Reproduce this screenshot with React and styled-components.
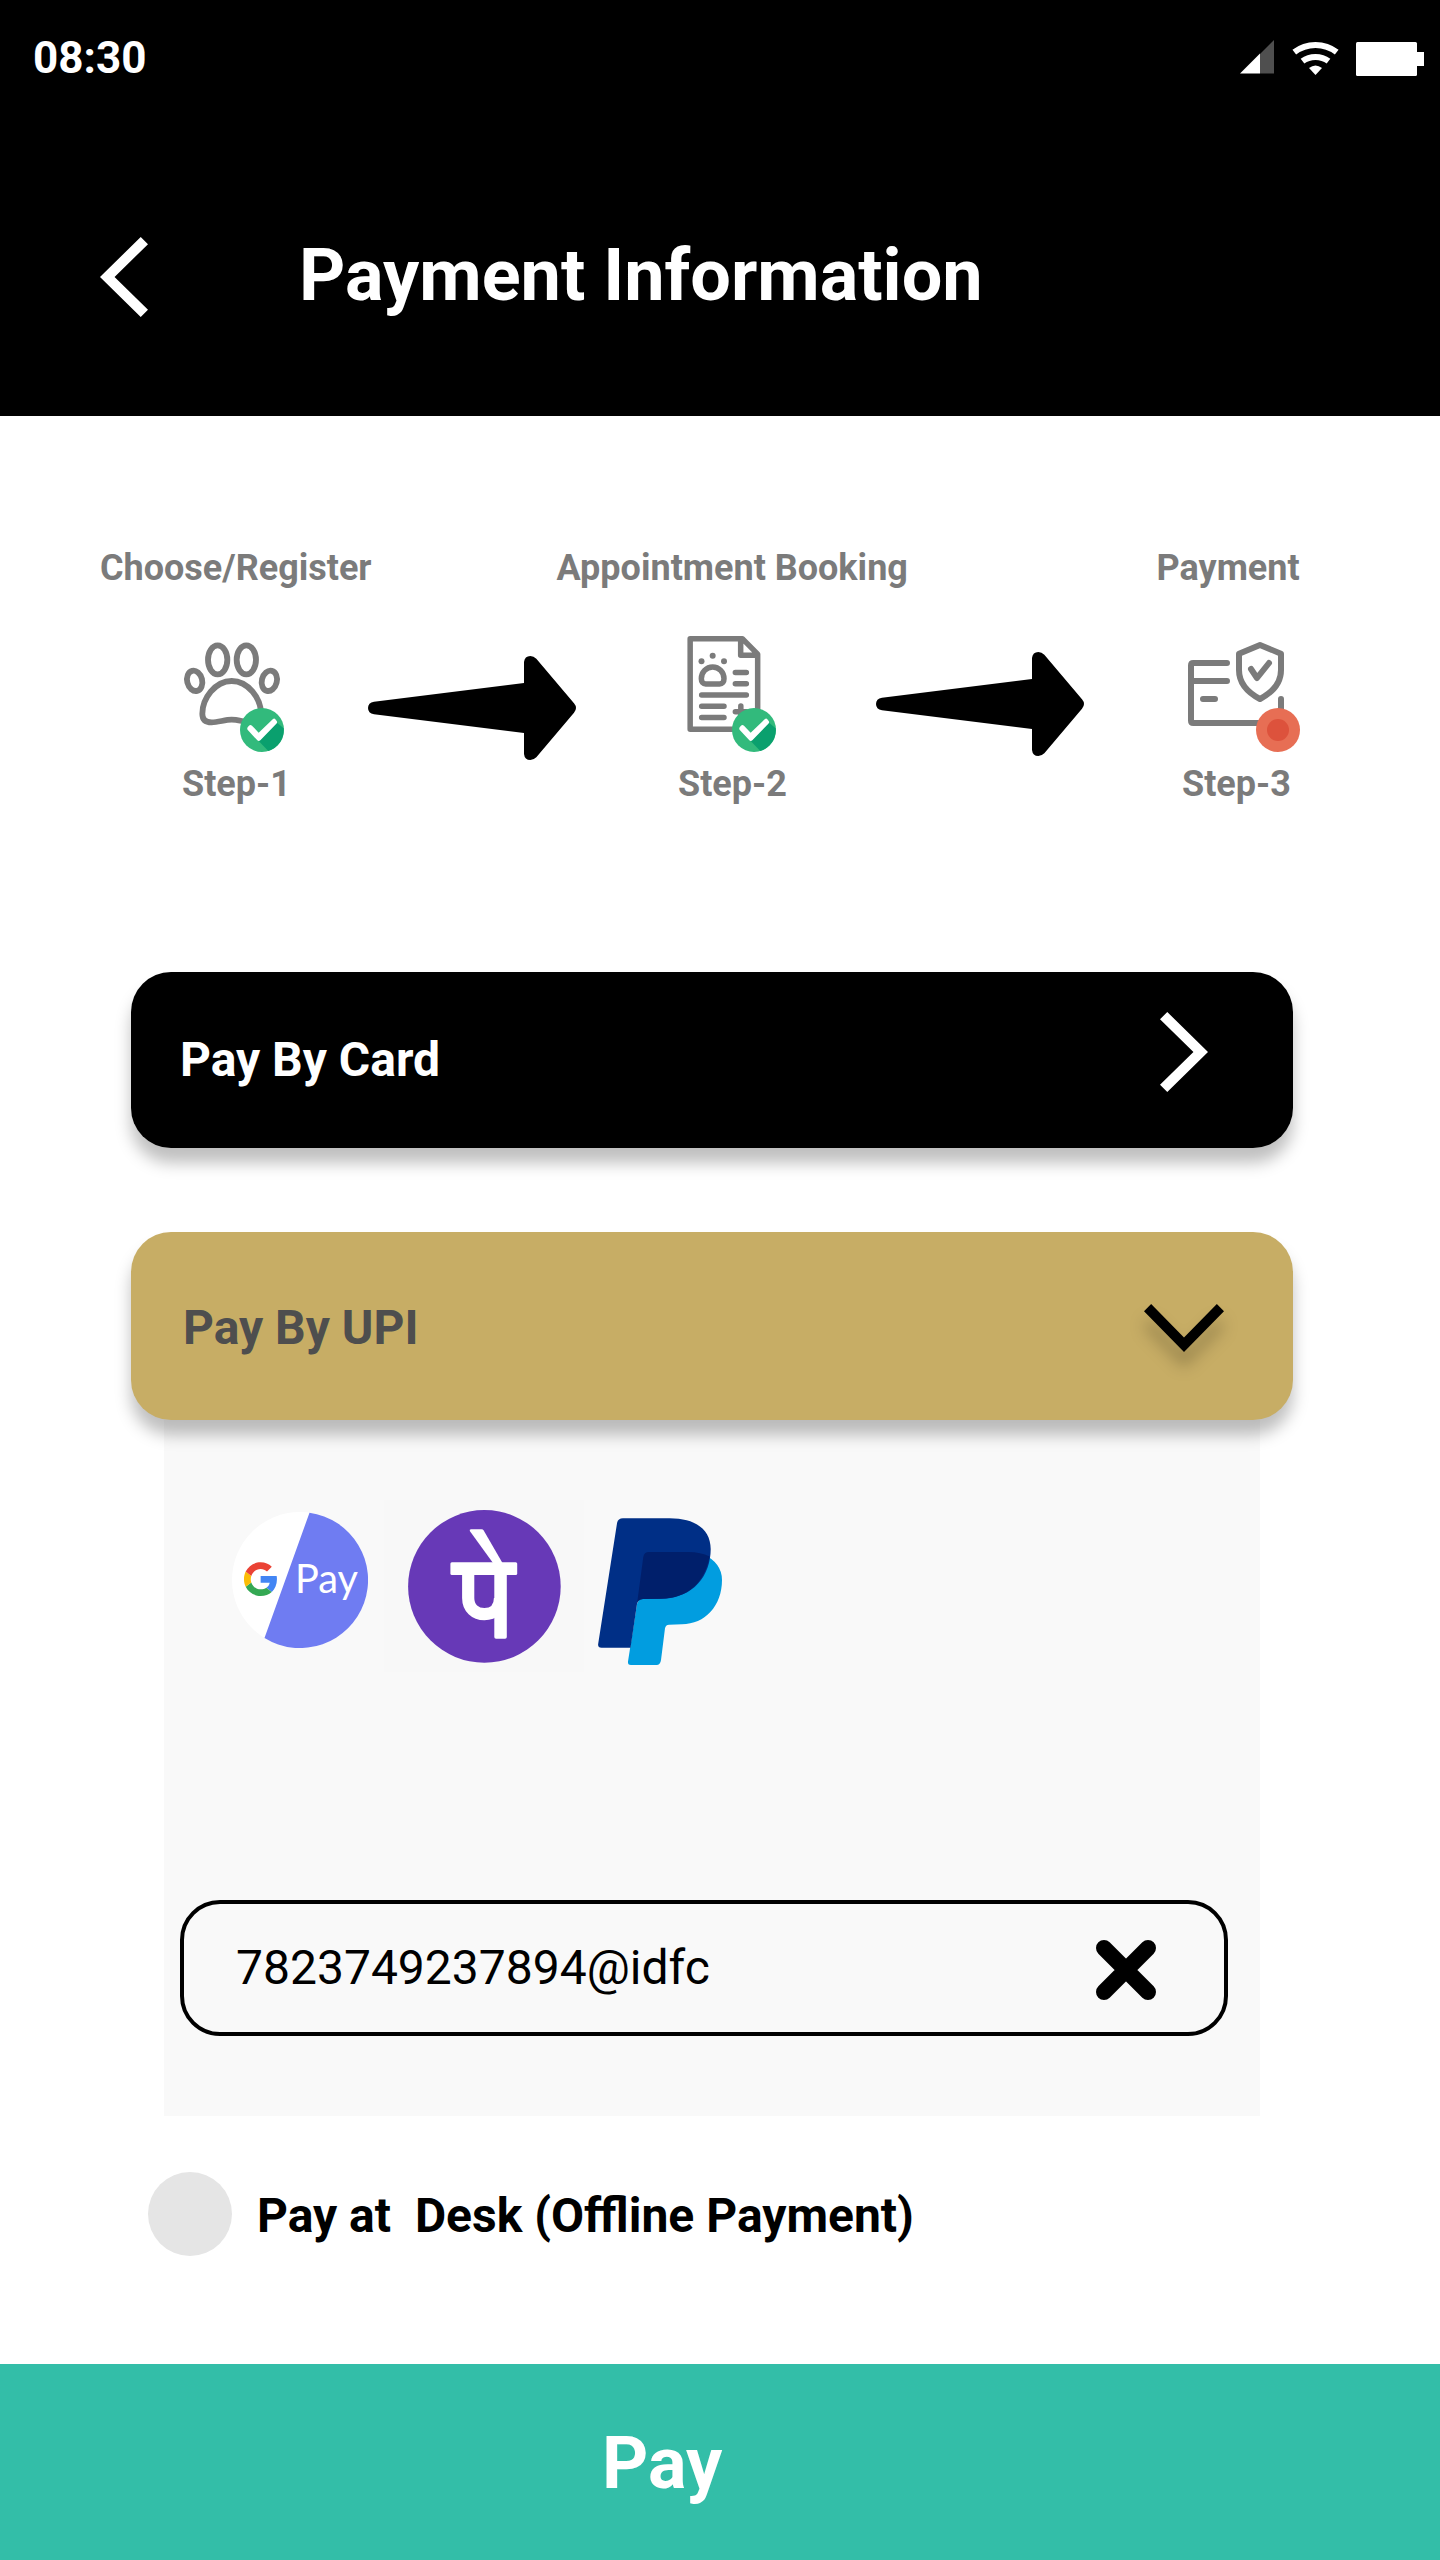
import React from "react";
import styled, { createGlobalStyle } from "styled-components";

const GlobalStyle = createGlobalStyle`
  * { box-sizing: border-box; }
  body { margin: 0; background: #ffffff; font-family: Roboto, "Liberation Sans", sans-serif; }
  svg { display: block; flex: none; }
`;

const Screen = styled.main`
  width: 1440px;
  height: 2560px;
  display: flex;
  flex-direction: column;
  background: #ffffff;
  overflow: hidden;
`;

const Header = styled.header`
  height: 416px;
  flex: none;
  background: #000000;
  color: #ffffff;
`;

const StatusBar = styled.div`
  height: 114px;
  display: flex;
  align-items: center;
  justify-content: space-between;
  padding: 0 16px 0 33px;
`;

const Clock = styled.time`
  padding-top: 2px;
  font-size: 44px;
  line-height: 44px;
  font-weight: 700;
`;

const StatusIcons = styled.div`
  display: flex;
  align-items: center;
  gap: 17.5px;
  padding-top: 4px;
`;

const TitleBar = styled.div`
  display: flex;
  align-items: flex-start;
  padding: 123px 0 0 100px;
`;

const Title = styled.h1`
  margin: 3px 0 0 151px;
  font-size: 72px;
  line-height: 72px;
  font-weight: 700;
  white-space: nowrap;
`;

const Steps = styled.section`
  padding-top: 134px;
`;

const StepRow = styled.div`
  display: flex;
  align-items: flex-start;
  height: ${(p) => p.$height}px;
  margin-top: ${(p) => p.$top || 0}px;
`;

const StepLabel = styled.span`
  margin-left: ${(p) => p.$gap}px;
  width: ${(p) => p.$width}px;
  flex: none;
  color: #7b7b7b;
  font-size: 36px;
  line-height: 36px;
  font-weight: 700;
  white-space: nowrap;
`;

const StepSlot = styled.div`
  margin: ${(p) => p.$drop || 0}px 0 0 ${(p) => p.$gap}px;
`;

const Options = styled.section`
  display: flex;
  flex-direction: column;
  padding: 170px 147px 0 131px;
`;

const Option = styled.button`
  position: relative;
  z-index: 1;
  display: flex;
  align-items: center;
  justify-content: space-between;
  height: ${(p) => p.$height}px;
  margin: ${(p) => p.$top || 0}px 0 0;
  padding: ${(p) => p.$padding};
  border: 0;
  border-radius: 40px;
  background: ${(p) => p.$bg};
  color: ${(p) => p.$color};
  box-shadow: 0 15px 16px rgba(0, 0, 0, 0.25);
  font: 700 48px/48px Roboto, "Liberation Sans", sans-serif;
`;

const ChevronSlot = styled.span`
  margin-top: ${(p) => p.$shift}px;
  filter: drop-shadow(0 15px 8px rgba(0, 0, 0, 0.25));
`;

const Panel = styled.div`
  margin: 0 33px;
  padding: 80px 32px 80px 16px;
  background: #f9f9f9;
`;

const Wallets = styled.div`
  display: flex;
  align-items: flex-start;
  height: 172px;
  padding-left: 52px;
`;

const Wallet = styled.div`
  margin: ${(p) => p.$drop}px 0 0 ${(p) => p.$gap}px;
`;

const Field = styled.div`
  height: 136px;
  margin-top: 228px;
  padding: 0 68px 0 52px;
  display: flex;
  align-items: center;
  justify-content: space-between;
  border: 4px solid #000000;
  border-radius: 40px;
  color: #000000;
  font-size: 48px;
  line-height: 48px;
`;

const ClearIcon = styled.svg`
  margin-top: 4px;
`;

const DeskRow = styled.label`
  display: flex;
  align-items: center;
  height: 84px;
  margin: 56px 0 0 148px;
`;

const Radio = styled.span`
  width: 84px;
  height: 84px;
  border-radius: 50%;
  background: #e5e5e5;
`;

const DeskText = styled.span`
  margin: 3px 0 0 25px;
  color: #000000;
  font-size: 48px;
  line-height: 48px;
  font-weight: 700;
  white-space: pre;
`;

const PayButton = styled.button`
  height: 196px;
  margin-top: auto;
  padding: 3px 0 0 602px;
  border: 0;
  background: #33bea8;
  color: #ffffff;
  text-align: left;
  font: 700 72px/72px Roboto, "Liberation Sans", sans-serif;
`;

const GREY = "#7b7b7b";

const ChevronSide = ({ flip }) => (
  <svg width="48" height="80" viewBox="0 0 11.67 19.8" preserveAspectRatio="none">
    <path
      fill="#fff"
      transform={flip ? undefined : "translate(11.67 0) scale(-1 1)"}
      d="M11.67 1.77 9.9 0 0 9.9l9.9 9.9 1.77-1.77L3.54 9.9z"
    />
  </svg>
);

const ChevronDown = () => (
  <svg width="80" height="48" viewBox="0 0 19.8 11.67" preserveAspectRatio="none">
    <path d="M1.77 0 0 1.77l9.9 9.9 9.9-9.9L18.03 0 9.9 8.13z" />
  </svg>
);

const Arrow = () => (
  <svg width="208" height="104" viewBox="0 0 624 312">
    <path d="M18 137 468 81V18Q470 0 487 0q10 0 18 8l113 134q12 14 0 28L505 304q-8 8-18 8-17 0-19-18v-63L18 175Q0 172 0 156q0-16 18-19Z" />
  </svg>
);

const DoneBadge = ({ x }) => (
  <g transform={`translate(${x} 0)`}>
    <circle cx="306" cy="330" r="66" fill="#32ba7c" />
    <path fill="#0aa06e" d="M296 363 351 308l20 17A66 66 0 0 1 325 393Z" />
    <path
      fill="#fff"
      d="M276 317 296 338 339 297q4-3 7 1l4 5q3 4-1 8L301 361q-5 4-9 0L264 331q-4-4-1-9l4-5q4-4 9 0Z"
    />
  </g>
);

const StepIcon = ({ children }) => (
  <svg width="150" height="146" viewBox="0 0 450 438">
    {children}
  </svg>
);

const PawIcon = () => (
  <StepIcon>
    <g fill="none" stroke={GREY} strokeWidth="17.5">
      <ellipse cx="173" cy="119.500" rx="29" ry="43.500" />
      <ellipse cx="259" cy="119.500" rx="29" ry="43.500" />
      <ellipse cx="104" cy="182.500" rx="22.500" ry="31" transform="rotate(-14 104 182.500)" />
      <ellipse cx="328" cy="182.500" rx="22.500" ry="31" transform="rotate(14 328 182.500)" />
      <path d="M215 183C165 183 127 236 127 281c0 18 9 26 28 26 20 0 40-8 60-8s40 8 60 8c19 0 28-8 28-26 0-45-38-98-88-98Z" />
    </g>
    <DoneBadge x={0} />
  </StepIcon>
);

const RecordIcon = () => (
  <StepIcon>
    <g fill="none" stroke={GREY} strokeWidth="16.5" strokeLinecap="round" strokeLinejoin="round">
      <path d="M90.500 56H247l46 46.500V327.500H90.500ZM242 56v50h51" />
      <path d="M158 141c-19 0-34 16-34 35 0 10 5 16 13 16h42c8 0 13-6 13-16 0-19-15-35-34-35ZM226 157.500h33M226 191h33M125 225h134M125 258.500h67M125 292.500h67M226 275h33M242.500 258v34" />
    </g>
    <g fill={GREY}>
      <circle cx="124.500" cy="123.500" r="9" />
      <circle cx="158" cy="107" r="9" />
      <circle cx="192" cy="123.500" r="9" />
    </g>
    <DoneBadge x={-24} />
  </StepIcon>
);

const CardShieldIcon = () => (
  <StepIcon>
    <g fill="none" stroke={GREY} strokeWidth="18" strokeLinecap="round" strokeLinejoin="round">
      <path d="M171 129H70q-7 0-7 7v166q0 7 7 7h263v-72M63 183h108M99 237h36" />
      <path d="M270 75l63 26v49c0 40-27 68-63 87-36-19-63-47-63-87v-49ZM243 147l18 27 36-45" />
    </g>
    <circle cx="324" cy="330" r="66" fill="#e76e54" />
    <circle cx="324" cy="330" r="33" fill="#dd523c" />
  </StepIcon>
);

const SignalIcon = () => (
  <svg width="34" height="40" viewBox="0 0 34 40">
    <path fill="#4f4f4f" d="M34 1v33.500H20V15Z" />
    <path fill="#fff" d="M20 14.500v20H0Z" />
  </svg>
);

const WifiIcon = () => (
  <svg width="47" height="40" viewBox="0 0 47 40">
    <g fill="none" stroke="#fff" strokeWidth="6">
      <path d="M2.300 13.200Q11.500 6 23.500 6t21.200 7.200" />
      <path d="M10.500 22.200Q16 18 23.500 18T36.500 22.200" />
    </g>
    <path fill="#fff" d="M17 29q6.500-5 13 0L23.500 36Z" />
  </svg>
);

const BatteryIcon = () => (
  <svg width="68" height="40" viewBox="0 0 68 40">
    <rect y="3" width="61" height="34" rx="1.500" fill="#fff" />
    <rect x="60" y="13" width="8" height="14" fill="#fff" />
  </svg>
);

const GooglePayLogo = () => (
  <svg width="136" height="136" viewBox="0 0 136 136">
    <circle cx="68" cy="68" r="68" fill="#fff" />
    <path fill="#6f7cf2" d="M77.500.700A68 68 0 1 1 32.500 126Z" />
    <g transform="translate(11.600 50.300) scale(.725)">
      <path fill="#4285f4" d="M46 23.500c0-1.600-.1-3.100-.4-4.600H23.500v9.200H36c-.5 2.900-2.200 5.400-4.600 7l7.500 5.800C43.200 36.900 46 30.800 46 23.500Z" />
      <path fill="#34a853" d="M23.500 46.500c6.200 0 11.400-2 15.300-5.600l-7.500-5.800c-2.100 1.400-4.700 2.200-7.800 2.200-6 0-11.100-4-12.900-9.500l-7.700 6c3.800 7.500 11.600 12.700 20.600 12.700Z" />
      <path fill="#fbbc05" d="M10.600 27.800c-.5-1.400-.7-2.900-.7-4.500s.3-3.100.7-4.500l-7.700-6C1.300 16 .5 19.600.5 23.300s.9 7.300 2.400 10.500Z" />
      <path fill="#ea4335" d="M23.500 9.300c3.400 0 6.400 1.200 8.800 3.400l6.600-6.600C34.900 2.400 29.700.1 23.500.1 14.500.1 6.700 5.300 2.900 12.800l7.700 6c1.800-5.500 6.900-9.500 12.900-9.500Z" />
    </g>
    <text x="63" y="81" fill="#fff" fontFamily="Lato, sans-serif" fontSize="41" textLength="63" lengthAdjust="spacingAndGlyphs">
      Pay
    </text>
  </svg>
);

const PhonePeLogo = () => (
  <svg width="200" height="172" viewBox="0 0 200 172">
    <rect width="200" height="172" fill="#f8f8f8" />
    <circle cx="100.400" cy="86.400" r="76.300" fill="#6739b7" />
    <g fill="#fff">
      <path d="M87 29.300h10.500q1.500 0 2.200 1.200L118.500 63H109L85.800 31q-.6-1.700 1.200-1.700Z" />
      <rect x="66.400" y="62.300" width="66.800" height="12.800" rx="1.500" />
      <path d="M110.300 70h12.500v67q0 1.700-1.700 1.700h-9q-1.800 0-1.800-1.700Z" />
    </g>
    <path fill="none" stroke="#fff" strokeWidth="12.200" d="M84.200 72v26c0 10 7 16.200 16.200 16.200S116 108 116 98" />
  </svg>
);

const PayPalLogo = () => (
  <svg width="124" height="148" viewBox="0 0 124 148">
    <path
      fill="#019de0"
      d="M105 36Q124 45 124 62C124 88 107 106 84 106.300L71 106.700q-3.500.3-4 3.600L63 142q-.7 5-4.500 5H33q-3.500 0-3-3.500L39 86l20-42Z"
    />
    <path
      fill="#002f86"
      d="M25 .200H71.600C98 .200 112.700 12 112.700 31c0 26-17 49.700-50 49.700L45 81q-5.500.3-6 5L32.500 129.700H3.500q-4 0-3.300-4L19.100 4.700Q20 .200 25 .200Z"
    />
    <path
      fill="#001f6b"
      d="M51 34h39q13 0 21.500 4.600C107 64 90 80.700 62.700 80.700L45 81q-5.500.3-6 5L45.300 39q.7-5 5.700-5Z"
    />
  </svg>
);

export default function App() {
  return (
    <>
      <GlobalStyle />
      <Screen>
        <Header>
          <StatusBar>
            <Clock>08:30</Clock>
            <StatusIcons>
              <SignalIcon />
              <WifiIcon />
              <BatteryIcon />
            </StatusIcons>
          </StatusBar>
          <TitleBar>
            <ChevronSide flip />
            <Title>Payment Information</Title>
          </TitleBar>
        </Header>

        <Steps>
          <StepRow $height={36}>
            <StepLabel $gap={100} $width={272}>Choose/Register</StepLabel>
            <StepLabel $gap={184.5} $width={352}>Appointment Booking</StepLabel>
            <StepLabel $gap={248} $width={150}>Payment</StepLabel>
          </StepRow>
          <StepRow $height={146} $top={34}>
            <StepSlot $gap={160}><PawIcon /></StepSlot>
            <StepSlot $gap={58} $drop={36}><Arrow /></StepSlot>
            <StepSlot $gap={84}><RecordIcon /></StepSlot>
            <StepSlot $gap={66} $drop={32}><Arrow /></StepSlot>
            <StepSlot $gap={86}><CardShieldIcon /></StepSlot>
          </StepRow>
          <StepRow $height={36}>
            <StepLabel $gap={182} $width={110}>Step-1</StepLabel>
            <StepLabel $gap={386} $width={110}>Step-2</StepLabel>
            <StepLabel $gap={394} $width={110}>Step-3</StepLabel>
          </StepRow>
        </Steps>

        <Options>
          <Option $height={176} $bg="#000000" $color="#ffffff" $padding="0 85px 0 49px">
            Pay By Card
            <ChevronSlot $shift={-16}><ChevronSide /></ChevronSlot>
          </Option>
          <Option $height={188} $top={84} $bg="#c7ad65" $color="#4e4e4e" $padding="3px 69px 0 52px">
            Pay By UPI
            <ChevronSlot $shift={1}><ChevronDown /></ChevronSlot>
          </Option>
          <Panel>
            <Wallets>
              <Wallet $gap={0} $drop={12}><GooglePayLogo /></Wallet>
              <Wallet $gap={16} $drop={0}><PhonePeLogo /></Wallet>
              <Wallet $gap={14} $drop={18}><PayPalLogo /></Wallet>
            </Wallets>
            <Field>
              7823749237894@idfc
              <ClearIcon width="60" height="60" viewBox="0 0 60 60">
                <path fill="none" stroke="#000" strokeWidth="16" strokeLinecap="round" d="M8 8l44 44M52 8 8 52" />
              </ClearIcon>
            </Field>
          </Panel>
        </Options>

        <DeskRow>
          <Radio />
          <DeskText>{"Pay at  Desk (Offline Payment)"}</DeskText>
        </DeskRow>

        <PayButton>Pay</PayButton>
      </Screen>
    </>
  );
}
